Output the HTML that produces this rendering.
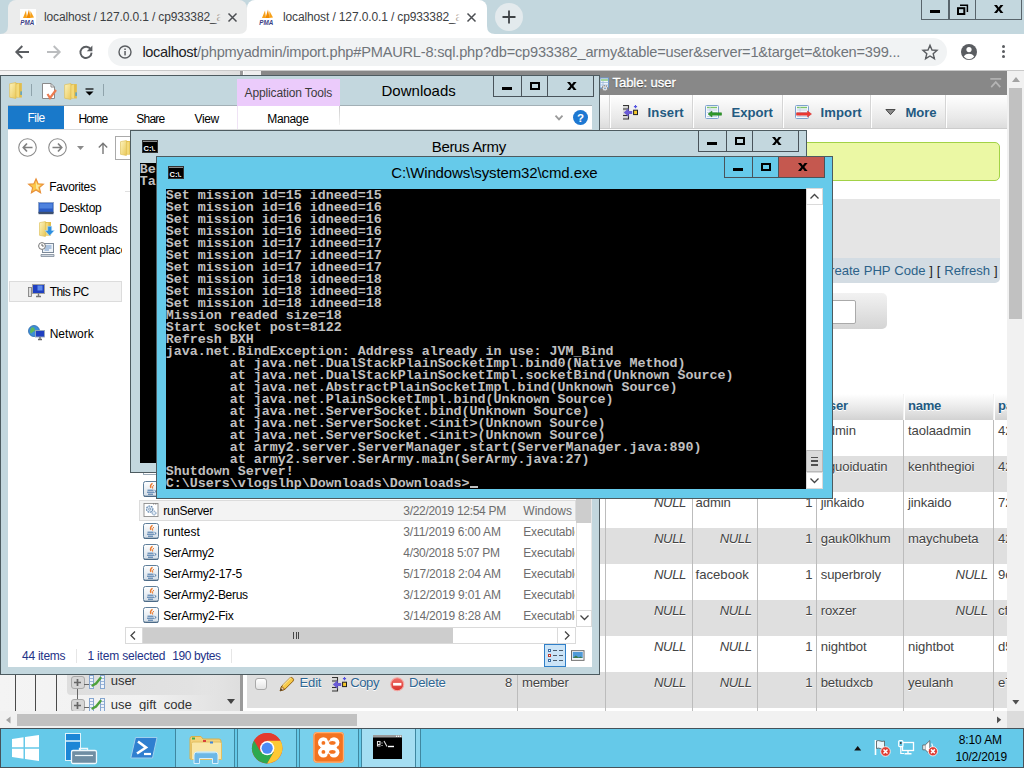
<!DOCTYPE html>
<html lang="en">
<head>
<meta charset="utf-8">
<title>localhost / 127.0.0.1 / cp933382_army / user | phpMyAdmin</title>
<style>
*{box-sizing:border-box;margin:0;padding:0}
html,body{width:1024px;height:768px;overflow:hidden;background:#fff}
body{position:relative;font-family:"Liberation Sans",Arial,sans-serif;font-size:12px;color:#000}
.a{position:absolute}
.t{position:absolute;white-space:nowrap;line-height:1}
svg{position:absolute;overflow:visible}
.seg{letter-spacing:-0.3px}
#tabstrip{left:0;top:0;width:1024px;height:34px;background:#c3d7de}
.tab{top:0;height:34px;border-radius:8px 8px 0 0}
.tabtxt{font-size:12px;color:#3c4043;top:10px}
#toolbar{left:0;top:34px;width:1024px;height:37px;background:#fff;border-bottom:1px solid #c9c9c9}
#omni{left:108px;top:38px;width:839px;height:28px;border-radius:14px;background:#f1f3f4}
.wc{top:0;height:20px;border:1px solid #58646b;border-top:none}
#page{left:0;top:71px;width:1024px;height:657px;background:#fff;overflow:hidden}
.lnk{color:#235a81}
.td{position:absolute;white-space:nowrap;font-size:13.1px;color:#444;line-height:1}
.nul{font-style:italic}
#taskbar{left:0;top:728px;width:1024px;height:40px;background:#65c9e9;border:1px solid #46525a}
.win{position:absolute;border:1px solid #4d5b60}
.cb{position:absolute;border:1px solid #49535a;border-top:none}
.cmdtxt{position:absolute;font-family:"Liberation Mono","DejaVu Sans Mono",monospace;font-weight:bold;font-size:13.33px;line-height:12px;color:#c0c0c0;white-space:pre}
.ex{position:absolute;white-space:nowrap;font-size:12px;line-height:1;letter-spacing:-0.3px}
</style>
</head>
<body>
<div class="a" id="tabstrip"></div>
<div class="a tab" style="left:8px;width:239px;background:#ebecec"></div>
<svg style="left:0;top:26px" width="8" height="8" viewBox="0 0 8 8"><path d="M8 0V8H0Q8 8 8 0Z" fill="#ebecec"/></svg>
<div class="a tab" style="left:247px;width:240px;background:#fff"></div>
<svg style="left:239px;top:26px" width="8" height="8" viewBox="0 0 8 8"><path d="M8 0V8H0Q8 8 8 0Z" fill="#fff"/></svg>
<svg style="left:487px;top:26px" width="8" height="8" viewBox="0 0 8 8"><path d="M0 0V8H8Q0 8 0 0Z" fill="#fff"/></svg>
<svg style="left:20px;top:9px" width="16" height="16" viewBox="0 0 16 16"><rect width="16" height="16" fill="#fff"/><path d="M3 9 L6 1.5 L7 9 Z" fill="#f7a11a"/><path d="M6.5 9 L9 0.5 L10.5 9 Z" fill="#f28c00"/><path d="M10 9 L10.5 2 L14 8.5 Z" fill="#f7a11a"/><text x="0.3" y="15.5" font-family="Liberation Sans,sans-serif" font-size="6.3" font-weight="bold" font-style="italic" fill="#3a3f86">PMA</text></svg>
<svg style="left:259px;top:9px" width="16" height="16" viewBox="0 0 16 16"><rect width="16" height="16" fill="#fff"/><path d="M3 9 L6 1.5 L7 9 Z" fill="#f7a11a"/><path d="M6.5 9 L9 0.5 L10.5 9 Z" fill="#f28c00"/><path d="M10 9 L10.5 2 L14 8.5 Z" fill="#f7a11a"/><text x="0.3" y="15.5" font-family="Liberation Sans,sans-serif" font-size="6.3" font-weight="bold" font-style="italic" fill="#3a3f86">PMA</text></svg>
<div class="t tabtxt" style="left:44px;top:8px;height:18px;line-height:18px;width:177px;overflow:hidden;letter-spacing:-0.13px">localhost / 127.0.0.1 / cp933382_army</div>
<div class="a" style="left:214px;top:8px;width:8px;height:18px;background:linear-gradient(to right,rgba(235,236,236,0),#ebecec 85%)"></div>
<div class="t tabtxt" style="left:283px;top:8px;height:18px;line-height:18px;width:177px;overflow:hidden;letter-spacing:-0.13px">localhost / 127.0.0.1 / cp933382_army</div>
<div class="a" style="left:453px;top:8px;width:8px;height:18px;background:linear-gradient(to right,rgba(255,255,255,0),#fff 85%)"></div>
<svg style="left:227.5px;top:12.5px" width="9" height="9" viewBox="0 0 9 9"><path d="M0.5 0.5L8.5 8.5M8.5 0.5L0.5 8.5" stroke="#4a4d51" stroke-width="1.5"/></svg>
<svg style="left:466.5px;top:12.5px" width="9" height="9" viewBox="0 0 9 9"><path d="M0.5 0.5L8.5 8.5M8.5 0.5L0.5 8.5" stroke="#4a4d51" stroke-width="1.5"/></svg>
<div class="a" style="left:495px;top:2.5px;width:28px;height:28px;border-radius:14px;background:#e3eaed"></div>
<svg style="left:502px;top:9.5px" width="14" height="14" viewBox="0 0 14 14"><path d="M7 0.5V13.5M0.5 7H13.5" stroke="#3f4346" stroke-width="1.8"/></svg>
<div class="a wc" style="left:921px;width:28px;background:#c3d7de"></div>
<div class="a wc" style="left:949px;width:27px;background:#c3d7de"></div>
<div class="a wc" style="left:975px;width:47px;background:#c3d7de"></div>
<div class="a" style="left:930px;top:10px;width:10px;height:3px;background:#000"></div>
<svg style="left:957px;top:3.6px" width="12" height="12" viewBox="0 0 12 12"><path d="M3 1.2H10.4V8" stroke="#000" stroke-width="1.5" fill="none"/><rect x="1" y="4.2" width="6.3" height="5.8" fill="none" stroke="#000" stroke-width="2"/></svg>
<svg style="left:994px;top:5px" width="9.4" height="8" viewBox="0 0 9.6 8"><path d="M0 0H3L4.8 2.4L6.6 0H9.6L6.3 4L9.6 8H6.6L4.8 5.6L3 8H0L3.3 4Z" fill="#000"/></svg>
<div class="a" id="toolbar"></div>
<svg style="left:15px;top:45px" width="14" height="14" viewBox="0 0 14 14"><path d="M14 7H2M7.3 1L1.3 7L7.3 13" stroke="#5a5d61" stroke-width="1.9" fill="none"/></svg>
<svg style="left:47px;top:45px" width="14" height="14" viewBox="0 0 14 14"><path d="M0 7H12M6.7 1L12.7 7L6.7 13" stroke="#bbbdbf" stroke-width="1.9" fill="none"/></svg>
<svg style="left:79px;top:45px" width="14" height="14" viewBox="0 0 14 14"><path d="M11.9 4.6A5.6 5.6 0 1 0 12.6 7.6" stroke="#5a5d61" stroke-width="1.9" fill="none"/><path d="M13.4 0.6V6.2H7.8Z" fill="#5a5d61"/></svg>
<div class="a" id="omni"></div>
<svg style="left:118px;top:45px" width="14" height="14" viewBox="0 0 14 14"><circle cx="7" cy="7" r="6" fill="none" stroke="#5a5d61" stroke-width="1.4"/><rect x="6.3" y="6" width="1.5" height="4.4" fill="#5a5d61"/><rect x="6.3" y="3.5" width="1.5" height="1.5" fill="#5a5d61"/></svg>
<div class="t" style="left:142.4px;top:44.64px;font-size:14.6px;color:#202124;letter-spacing:-0.336px">localhost<span style="color:#70757a;letter-spacing:-0.198px">/phpmyadmin/import.php#PMAURL-8:sql.php?db=cp933382_army&amp;table=user&amp;server=1&amp;target=&amp;token=399...</span></div>
<svg style="left:922px;top:44px" width="16" height="16" viewBox="0 0 16 16"><path d="M8 1.3L10 6L15 6.4L11.2 9.7L12.4 14.7L8 12L3.6 14.7L4.8 9.7L1 6.4L6 6Z" fill="none" stroke="#5a5d61" stroke-width="1.4" stroke-linejoin="miter"/></svg>
<svg style="left:961px;top:44px" width="16" height="16" viewBox="0 0 16 16"><circle cx="8" cy="8" r="8" fill="#5a5d61"/><circle cx="8" cy="5.6" r="2.6" fill="#fff"/><path d="M2.8 12.6C4 10.4 6 9.8 8 9.8S12 10.4 13.2 12.6A6.6 6.6 0 0 1 2.8 12.6Z" fill="#fff"/></svg>
<div class="a" style="left:1001.5px;top:45.0px;width:3px;height:3px;border-radius:2px;background:#5a5d61"></div>
<div class="a" style="left:1001.5px;top:50.0px;width:3px;height:3px;border-radius:2px;background:#5a5d61"></div>
<div class="a" style="left:1001.5px;top:55.0px;width:3px;height:3px;border-radius:2px;background:#5a5d61"></div>
<div class="a" id="page">
<div class="a" style="left:0;top:0;width:240px;height:640px;background:linear-gradient(to right,#f4f4f4,#f1f1f1 60%,#dedede)"></div>
<div class="a" style="left:239.5px;top:0;width:3.5px;height:640px;background:#9a9a9a"></div>
<div class="a" style="left:244px;top:0;width:763px;height:24px;background:#888"></div>
<div class="a" style="left:244px;top:0;width:17px;height:4px;background:#eee"></div>
<div class="t" style="left:612.5px;top:5px;font-size:13.1px;color:#fff;letter-spacing:-0.08px;text-shadow:0 1px 1px #333;-webkit-text-stroke:0.35px #fff;">Table: user</div>
<svg style="left:600px;top:6.5px" width="10" height="14" viewBox="0 0 10 14"><rect x="0" y="0" width="8.5" height="10" fill="#eef3f9" stroke="#6d9bd0" stroke-width="1"/><path d="M1 2H8" stroke="#79c36a" stroke-width="1.3"/><path d="M0 4.5H8.5M0 7H8.5M3 3V10" stroke="#9bb9dd" stroke-width="0.8"/><circle cx="5" cy="10.3" r="2.7" fill="#e4e4e4" stroke="#8a8a8a" stroke-width="1.3" stroke-dasharray="1.4 0.8"/><circle cx="5" cy="10.3" r="0.9" fill="#6d9bd0"/></svg>
<svg style="left:990px;top:7px" width="11.5" height="10" viewBox="0 0 12 11"><path d="M0 1H12" stroke="#b4b4b4" stroke-width="1.8"/><path d="M1 10L6 4.5L11 10" stroke="#b4b4b4" stroke-width="1.8" fill="none"/></svg>
<div class="a" style="left:244px;top:24px;width:763px;height:34px;background:linear-gradient(#fff,#e9e9e9 70%,#dcdcdc);border-bottom:1px solid #ccc"></div>
<div class="a" style="left:609px;top:24px;width:2px;height:33px;background:linear-gradient(to right,#d5d5d5 50%,#fff 50%)"></div>
<div class="a" style="left:692px;top:24px;width:2px;height:33px;background:linear-gradient(to right,#d5d5d5 50%,#fff 50%)"></div>
<div class="a" style="left:782px;top:24px;width:2px;height:33px;background:linear-gradient(to right,#d5d5d5 50%,#fff 50%)"></div>
<div class="a" style="left:870px;top:24px;width:2px;height:33px;background:linear-gradient(to right,#d5d5d5 50%,#fff 50%)"></div>
<div class="a" style="left:945px;top:24px;width:2px;height:33px;background:linear-gradient(to right,#d5d5d5 50%,#fff 50%)"></div>
<div class="t" style="left:647.6px;top:35px;font-size:13.1px;color:#235a81;letter-spacing:0.088px;font-weight:bold;">Insert</div>
<div class="t" style="left:731.5px;top:35px;font-size:13.1px;color:#235a81;letter-spacing:0.002px;font-weight:bold;">Export</div>
<div class="t" style="left:820.6px;top:35px;font-size:13.1px;color:#235a81;letter-spacing:0.075px;font-weight:bold;">Import</div>
<div class="t" style="left:905.5px;top:35px;font-size:13.1px;color:#235a81;letter-spacing:-0.075px;font-weight:bold;">More</div>
<svg style="left:622px;top:32.7px" width="16" height="16" viewBox="0 0 16 16"><rect x="1" y="1.5" width="5.5" height="13.5" fill="#d6d6d6"/><path d="M1 1.5H6.5V15H1M1 5H6.5M1 11.5H6.5" stroke="#333" stroke-width="1.1" fill="none"/><path d="M1.8 8.5L6.6 4.3V7H10.2V10H6.6V12.7Z" fill="#6a5bd6"/><rect x="11.6" y="6.2" width="3.9" height="4.4" fill="#f6c92c" stroke="#222" stroke-width="1"/><path d="M13.5 1V4.2M11.9 2.6H15.1" stroke="#5252e0" stroke-width="1.1"/></svg>
<svg style="left:704.5px;top:33.5px" width="17" height="15" viewBox="0 0 17 15"><rect x="0.5" y="0.5" width="13" height="13" rx="1" fill="#f4f8fc" stroke="#7da2ce"/><path d="M2 2.5H12" stroke="#7cc36a" stroke-width="1.4"/><path d="M2 5H12M2 7.5H12M2 11.5H12" stroke="#c3d3e8" stroke-width="1"/><path d="M5 2V12" stroke="#c3d3e8" stroke-width="0.8"/><path d="M3 9L7 6V7.8H16.5V10.2H7V12Z" fill="#2f9a2b" stroke="#1f7a1c" stroke-width="0.5"/></svg>
<svg style="left:795px;top:33.5px" width="17" height="15" viewBox="0 0 17 15"><rect x="0.5" y="0.5" width="13" height="13" rx="1" fill="#f4f8fc" stroke="#7da2ce"/><path d="M2 2.5H12" stroke="#7cc36a" stroke-width="1.4"/><path d="M2 5H12M2 7.5H12M2 11.5H12" stroke="#c3d3e8" stroke-width="1"/><path d="M5 2V12" stroke="#c3d3e8" stroke-width="0.8"/><path d="M16.5 9L12.5 6V7.8H1.5V10.2H12.5V12Z" fill="#ee3a36" stroke="#d12a26" stroke-width="0.5"/></svg>
<svg style="left:885px;top:38.3px" width="11" height="6.2" viewBox="0 0 12 7"><path d="M0.8 0.6H11.2L6 6.4Z" fill="#8a8a8a" stroke="#3a3a3a" stroke-width="1"/></svg>
<div class="a" style="left:300px;top:71px;width:700px;height:39px;background:#ebf8a4;border:1px solid #a2d246;border-radius:5px"></div>
<div class="a" style="left:300px;top:127.5px;width:700px;height:59.5px;background:#e5e5e5"></div>
<div class="a" style="left:300px;top:187px;width:700px;height:25px;background:#d3dce3;border-radius:0 0 5px 5px"></div>
<div class="t" style="right:26.5px;top:192.5px;font-size:13.1px;color:#2c6289;letter-spacing:-0.03px;word-spacing:0.3px"><span style="color:#222">[</span> Create PHP Code <span style="color:#222">] [</span> Refresh <span style="color:#222">]</span></div>
<div class="a" style="left:300px;top:222px;width:587px;height:36px;background:linear-gradient(#f2f2f2,#d4d4d4);border-radius:5px"></div>
<div class="a" style="left:700px;top:229px;width:156px;height:24px;background:#fff;border:1px solid #aaa;border-radius:2px"></div>
<div class="a" style="left:244px;top:323px;width:763px;height:26px;background:linear-gradient(#fff,#e6e6e6 60%,#d2d2d2)"></div>
<div class="a" style="left:244px;top:349px;width:763px;height:36px;background:#fff"></div>
<div class="a" style="left:244px;top:385px;width:763px;height:36px;background:#dfdfdf"></div>
<div class="a" style="left:244px;top:421px;width:763px;height:36px;background:#fff"></div>
<div class="a" style="left:244px;top:457px;width:763px;height:36px;background:#dfdfdf"></div>
<div class="a" style="left:244px;top:493px;width:763px;height:36px;background:#fff"></div>
<div class="a" style="left:244px;top:529px;width:763px;height:36px;background:#dfdfdf"></div>
<div class="a" style="left:244px;top:565px;width:763px;height:36px;background:#fff"></div>
<div class="a" style="left:244px;top:601px;width:763px;height:36px;background:#dfdfdf"></div>
<div class="a" style="left:244px;top:637px;width:763px;height:36px;background:#fff"></div>
<div class="a" style="left:244px;top:673px;width:763px;height:36px;background:#dfdfdf"></div>
<div class="a" style="left:244px;top:323px;width:3px;height:320px;background:#fff"></div>
<div class="a" style="left:244px;top:637px;width:780px;height:3px;background:#fff"></div>
<div class="a" style="left:517px;top:323px;width:1px;height:340px;background:#bcbcbc"></div>
<div class="a" style="left:517px;top:323px;width:2px;height:26px;background:linear-gradient(to right,#f2f2f2 50%,#fff 50%)"></div>
<div class="a" style="left:605px;top:323px;width:1px;height:340px;background:#bcbcbc"></div>
<div class="a" style="left:605px;top:323px;width:2px;height:26px;background:linear-gradient(to right,#f2f2f2 50%,#fff 50%)"></div>
<div class="a" style="left:692px;top:323px;width:1px;height:340px;background:#bcbcbc"></div>
<div class="a" style="left:692px;top:323px;width:2px;height:26px;background:linear-gradient(to right,#f2f2f2 50%,#fff 50%)"></div>
<div class="a" style="left:757px;top:323px;width:1px;height:340px;background:#bcbcbc"></div>
<div class="a" style="left:757px;top:323px;width:2px;height:26px;background:linear-gradient(to right,#f2f2f2 50%,#fff 50%)"></div>
<div class="a" style="left:816px;top:323px;width:1px;height:340px;background:#bcbcbc"></div>
<div class="a" style="left:816px;top:323px;width:2px;height:26px;background:linear-gradient(to right,#f2f2f2 50%,#fff 50%)"></div>
<div class="a" style="left:903px;top:323px;width:1px;height:340px;background:#bcbcbc"></div>
<div class="a" style="left:903px;top:323px;width:2px;height:26px;background:linear-gradient(to right,#f2f2f2 50%,#fff 50%)"></div>
<div class="a" style="left:993px;top:323px;width:1px;height:340px;background:#bcbcbc"></div>
<div class="a" style="left:993px;top:323px;width:2px;height:26px;background:linear-gradient(to right,#f2f2f2 50%,#fff 50%)"></div>
<div class="t" style="left:820.7px;top:328px;font-size:13.1px;color:#235a81;letter-spacing:-0.043px;font-weight:bold;text-shadow:0 1px 0 #fff;">user</div>
<div class="t" style="left:908px;top:328px;font-size:13.1px;color:#235a81;letter-spacing:-0.305px;font-weight:bold;text-shadow:0 1px 0 #fff;">name</div>
<div class="t" style="left:998px;top:328px;font-size:13.1px;color:#235a81;letter-spacing:-0.112px;font-weight:bold;text-shadow:0 1px 0 #fff;">pass</div>
<div class="t" style="left:820.7px;top:353px;font-size:13.1px;color:#444;letter-spacing:-0.107px;text-shadow:0 1px 0 #fff;">admin</div>
<div class="t" style="left:908px;top:353px;font-size:13.1px;color:#444;letter-spacing:-0.109px;text-shadow:0 1px 0 #fff;">taolaadmin</div>
<div class="t" style="left:998px;top:353px;font-size:13.1px;color:#444;letter-spacing:-0.109px;text-shadow:0 1px 0 #fff;">42</div>
<div class="t" style="left:820.7px;top:389px;font-size:13.1px;color:#444;letter-spacing:-0.092px;text-shadow:0 1px 0 #fff;">nguoiduatin</div>
<div class="t" style="left:908px;top:389px;font-size:13.1px;color:#444;letter-spacing:-0.046px;text-shadow:0 1px 0 #fff;">kenhthegioi</div>
<div class="t" style="left:998px;top:389px;font-size:13.1px;color:#444;letter-spacing:-0.109px;text-shadow:0 1px 0 #fff;">42</div>
<div class="t" style="left:654.0px;top:425px;font-size:13.1px;color:#444;letter-spacing:-0.373px;font-style:italic;text-shadow:0 1px 0 #fff;">NULL</div>
<div class="t" style="left:695.6px;top:425px;font-size:13.1px;color:#444;letter-spacing:-0.096px;text-shadow:0 1px 0 #fff;">admin</div>
<div class="t" style="left:805.1999999999999px;top:425px;font-size:13.1px;color:#444;letter-spacing:-1.686px;text-shadow:0 1px 0 #fff;">1</div>
<div class="t" style="left:820.7px;top:425px;font-size:13.1px;color:#444;letter-spacing:-0.115px;text-shadow:0 1px 0 #fff;">jinkaido</div>
<div class="t" style="left:908px;top:425px;font-size:13.1px;color:#444;letter-spacing:-0.115px;text-shadow:0 1px 0 #fff;">jinkaido</div>
<div class="t" style="left:998px;top:425px;font-size:13.1px;color:#444;letter-spacing:-0.109px;text-shadow:0 1px 0 #fff;">72</div>
<div class="t" style="left:654.0px;top:461px;font-size:13.1px;color:#444;letter-spacing:-0.373px;font-style:italic;text-shadow:0 1px 0 #fff;">NULL</div>
<div class="t" style="left:719.7px;top:461px;font-size:13.1px;color:#444;letter-spacing:-0.373px;font-style:italic;text-shadow:0 1px 0 #fff;">NULL</div>
<div class="t" style="left:805.1999999999999px;top:461px;font-size:13.1px;color:#444;letter-spacing:-1.686px;text-shadow:0 1px 0 #fff;">1</div>
<div class="t" style="left:820.7px;top:461px;font-size:13.1px;color:#444;letter-spacing:-0.084px;text-shadow:0 1px 0 #fff;">gauk0lkhum</div>
<div class="t" style="left:908px;top:461px;font-size:13.1px;color:#444;letter-spacing:-0.077px;text-shadow:0 1px 0 #fff;">maychubeta</div>
<div class="t" style="left:998px;top:461px;font-size:13.1px;color:#444;letter-spacing:-0.109px;text-shadow:0 1px 0 #fff;">42</div>
<div class="t" style="left:654.0px;top:497px;font-size:13.1px;color:#444;letter-spacing:-0.373px;font-style:italic;text-shadow:0 1px 0 #fff;">NULL</div>
<div class="t" style="left:695.6px;top:497px;font-size:13.1px;color:#444;letter-spacing:0.004px;text-shadow:0 1px 0 #fff;">facebook</div>
<div class="t" style="left:805.1999999999999px;top:497px;font-size:13.1px;color:#444;letter-spacing:-1.686px;text-shadow:0 1px 0 #fff;">1</div>
<div class="t" style="left:820.7px;top:497px;font-size:13.1px;color:#444;letter-spacing:-0.086px;text-shadow:0 1px 0 #fff;">superbroly</div>
<div class="t" style="left:955.6px;top:497px;font-size:13.1px;color:#444;letter-spacing:-0.373px;font-style:italic;text-shadow:0 1px 0 #fff;">NULL</div>
<div class="t" style="left:998px;top:497px;font-size:13.1px;color:#444;letter-spacing:-0.104px;text-shadow:0 1px 0 #fff;">9c</div>
<div class="t" style="left:654.0px;top:533px;font-size:13.1px;color:#444;letter-spacing:-0.373px;font-style:italic;text-shadow:0 1px 0 #fff;">NULL</div>
<div class="t" style="left:719.7px;top:533px;font-size:13.1px;color:#444;letter-spacing:-0.373px;font-style:italic;text-shadow:0 1px 0 #fff;">NULL</div>
<div class="t" style="left:805.1999999999999px;top:533px;font-size:13.1px;color:#444;letter-spacing:-1.686px;text-shadow:0 1px 0 #fff;">1</div>
<div class="t" style="left:820.7px;top:533px;font-size:13.1px;color:#444;letter-spacing:-0.133px;text-shadow:0 1px 0 #fff;">roxzer</div>
<div class="t" style="left:955.6px;top:533px;font-size:13.1px;color:#444;letter-spacing:-0.373px;font-style:italic;text-shadow:0 1px 0 #fff;">NULL</div>
<div class="t" style="left:998px;top:533px;font-size:13.1px;color:#444;letter-spacing:-0.076px;text-shadow:0 1px 0 #fff;">cf</div>
<div class="t" style="left:654.0px;top:569px;font-size:13.1px;color:#444;letter-spacing:-0.373px;font-style:italic;text-shadow:0 1px 0 #fff;">NULL</div>
<div class="t" style="left:719.7px;top:569px;font-size:13.1px;color:#444;letter-spacing:-0.373px;font-style:italic;text-shadow:0 1px 0 #fff;">NULL</div>
<div class="t" style="left:805.1999999999999px;top:569px;font-size:13.1px;color:#444;letter-spacing:-1.686px;text-shadow:0 1px 0 #fff;">1</div>
<div class="t" style="left:820.7px;top:569px;font-size:13.1px;color:#444;letter-spacing:-0.087px;text-shadow:0 1px 0 #fff;">nightbot</div>
<div class="t" style="left:908px;top:569px;font-size:13.1px;color:#444;letter-spacing:-0.087px;text-shadow:0 1px 0 #fff;">nightbot</div>
<div class="t" style="left:998px;top:569px;font-size:13.1px;color:#444;letter-spacing:-0.109px;text-shadow:0 1px 0 #fff;">d5</div>
<div class="t" style="left:654.0px;top:605px;font-size:13.1px;color:#444;letter-spacing:-0.373px;font-style:italic;text-shadow:0 1px 0 #fff;">NULL</div>
<div class="t" style="left:719.7px;top:605px;font-size:13.1px;color:#444;letter-spacing:-0.373px;font-style:italic;text-shadow:0 1px 0 #fff;">NULL</div>
<div class="t" style="left:805.1999999999999px;top:605px;font-size:13.1px;color:#444;letter-spacing:-1.686px;text-shadow:0 1px 0 #fff;">1</div>
<div class="t" style="left:820.7px;top:605px;font-size:13.1px;color:#444;letter-spacing:-0.1px;text-shadow:0 1px 0 #fff;">betudxcb</div>
<div class="t" style="left:908px;top:605px;font-size:13.1px;color:#444;letter-spacing:-0.098px;text-shadow:0 1px 0 #fff;">yeulanh</div>
<div class="t" style="left:998px;top:605px;font-size:13.1px;color:#444;letter-spacing:-0.109px;text-shadow:0 1px 0 #fff;">e7</div>
<div class="a" style="left:255px;top:607px;width:12px;height:12px;border:1px solid #a9a9a9;border-radius:3px;background:linear-gradient(#fff,#e4e4e4)"></div>
<svg style="left:279px;top:604.5px" width="16" height="16" viewBox="0 0 16 16"><path d="M1.2 14.8L2.6 10.2L10.8 2Q12.3 0.8 13.8 2.2T14 5.2L5.8 13.4Z" fill="#f7c948" stroke="#8f5e12" stroke-width="1"/><path d="M4 9.6L12 1.8" stroke="#fbe08a" stroke-width="1.2"/><path d="M1.2 14.8L2.6 10.2L5.8 13.4Z" fill="#f0c9a0" stroke="#7a4a0a" stroke-width="0.8"/><path d="M1.2 14.8L2 12.6L3.4 14Z" fill="#333"/></svg>
<div class="t" style="left:299.5px;top:605px;font-size:13.1px;color:#2d6694;letter-spacing:-0.193px;text-shadow:0 1px 0 #fff;">Edit</div>
<svg style="left:330.5px;top:604.6px" width="16" height="16" viewBox="0 0 16 16"><rect x="1" y="1.5" width="5.5" height="13.5" fill="#d6d6d6"/><path d="M1 1.5H6.5V15H1M1 5H6.5M1 11.5H6.5" stroke="#333" stroke-width="1.1" fill="none"/><path d="M1.8 8.5L6.6 4.3V7H10.2V10H6.6V12.7Z" fill="#6a5bd6"/><rect x="11.6" y="6.2" width="3.9" height="4.4" fill="#f6c92c" stroke="#222" stroke-width="1"/><path d="M13.5 1V4.2M11.9 2.6H15.1" stroke="#5252e0" stroke-width="1.1"/></svg>
<div class="t" style="left:350.3px;top:605px;font-size:13.1px;color:#2d6694;letter-spacing:-0.47px;text-shadow:0 1px 0 #fff;">Copy</div>
<svg style="left:390px;top:606px" width="14.5" height="14.5" viewBox="0 0 14 14"><defs><linearGradient id="dg" x1="0" y1="0" x2="0" y2="1"><stop offset="0" stop-color="#f0706a"/><stop offset="1" stop-color="#d8302a"/></linearGradient></defs><circle cx="7" cy="7" r="6.3" fill="url(#dg)" stroke="#f3a9a5" stroke-width="1"/><rect x="3" y="5.7" width="8" height="2.6" fill="#fff"/></svg>
<div class="t" style="left:409px;top:605px;font-size:13.1px;color:#2d6694;letter-spacing:-0.195px;text-shadow:0 1px 0 #fff;">Delete</div>
<div class="t" style="left:505px;top:605px;font-size:13.1px;color:#444;letter-spacing:-0.786px;text-shadow:0 1px 0 #fff;">8</div>
<div class="t" style="left:522px;top:605px;font-size:13.1px;color:#444;letter-spacing:-0.257px;text-shadow:0 1px 0 #fff;">member</div>
<div class="a" style="left:67px;top:601px;width:156px;height:23px;border-radius:0 0 0 4px;background:linear-gradient(to right,#dedede,#e2e2e2 80%,rgba(226,226,226,0))"></div>
<div class="a" style="left:15px;top:601px;width:1px;height:40px;background:#4a4a4a"></div>
<div class="a" style="left:35px;top:601px;width:1px;height:40px;background:#4a4a4a"></div>
<div class="a" style="left:56px;top:601px;width:1px;height:40px;background:#4a4a4a"></div>
<div class="a" style="left:77px;top:611px;width:1px;height:26px;background:#666"></div>
<div class="a" style="left:71px;top:604.5px;width:13.5px;height:13px;border:1px solid #a8a8a8;border-radius:3px;background:#d6d6d6"></div>
<svg style="left:74.2px;top:607.5px" width="7" height="7" viewBox="0 0 7 7"><path d="M3.5 0V7M0 3.5H7" stroke="#666" stroke-width="1.7"/></svg>
<div class="a" style="left:84px;top:612.5px;width:5px;height:1px;background:#666"></div>
<svg style="left:89px;top:603.5px" width="16" height="14" viewBox="0 0 16 14"><rect x="0.5" y="0.5" width="4" height="13" fill="#eef3fa" stroke="#86a6cf"/><rect x="11.5" y="0.5" width="4" height="13" fill="#eef3fa" stroke="#86a6cf"/><path d="M1 3.5H4M1 6.5H4M1 9.5H4M12 3.5H15M12 6.5H15M12 9.5H15" stroke="#86a6cf" stroke-width="0.8"/><path d="M3.5 10.5L7 8.5L11.5 3" stroke="#4ea23a" stroke-width="2.4" fill="none" stroke-linecap="round"/></svg>
<div class="t" style="left:110.8px;top:603px;font-size:13.1px;color:#333;letter-spacing:-0.121px;">user</div>
<div class="a" style="left:71px;top:627.5px;width:13.5px;height:13px;border:1px solid #a8a8a8;border-radius:3px;background:#d6d6d6"></div>
<svg style="left:74.2px;top:630.5px" width="7" height="7" viewBox="0 0 7 7"><path d="M3.5 0V7M0 3.5H7" stroke="#666" stroke-width="1.7"/></svg>
<div class="a" style="left:84px;top:635.5px;width:5px;height:1px;background:#666"></div>
<svg style="left:89px;top:626.5px" width="16" height="14" viewBox="0 0 16 14"><rect x="0.5" y="0.5" width="4" height="13" fill="#eef3fa" stroke="#86a6cf"/><rect x="11.5" y="0.5" width="4" height="13" fill="#eef3fa" stroke="#86a6cf"/><path d="M1 3.5H4M1 6.5H4M1 9.5H4M12 3.5H15M12 6.5H15M12 9.5H15" stroke="#86a6cf" stroke-width="0.8"/><path d="M3.5 10.5L7 8.5L11.5 3" stroke="#4ea23a" stroke-width="2.4" fill="none" stroke-linecap="round"/></svg>
<div class="t" style="left:110.8px;top:627px;font-size:13.1px;color:#333;letter-spacing:-0.029px;">use_gift_code</div>
<svg style="left:227px;top:628px" width="8" height="5" viewBox="0 0 8 5"><path d="M0 0H8L4 5Z" fill="#444"/></svg>
<div class="a" style="left:1007px;top:0;width:17px;height:640px;background:#f1f1f1"></div>
<div class="a" style="left:1009px;top:17px;width:13px;height:231px;background:#c1c1c1"></div>
<svg style="left:1011.5px;top:6px" width="8" height="5" viewBox="0 0 8 5"><path d="M0 5H8L4 0Z" fill="#a3a3a3"/></svg>
<svg style="left:1011.7px;top:629px" width="7.6" height="4.4" viewBox="0 0 8 5"><path d="M0 0H8L4 5Z" fill="#505050"/></svg>
<div class="a" style="left:0;top:640px;width:1024px;height:17px;background:#f1f1f1"></div>
<div class="a" style="left:17px;top:642.5px;width:340px;height:12px;background:#c1c1c1"></div>
<svg style="left:6px;top:644.5px" width="4.5" height="8" viewBox="0 0 5 8"><path d="M5 0V8L0 4Z" fill="#a3a3a3"/></svg>
<svg style="left:997px;top:645.2px" width="4.2" height="7.6" viewBox="0 0 5 8"><path d="M0 0V8L5 4Z" fill="#505050"/></svg>
<div class="a" style="left:1007px;top:640px;width:17px;height:17px;background:#dcdcdc"></div>
</div>
<div class="a" id="taskbar"></div>
<svg style="left:12px;top:735px" width="27" height="26" viewBox="0 0 27 26"><path d="M0 4L11.5 2.3V12.3H0ZM13 2L27 0V12.3H13ZM0 13.7H11.5V23.7L0 22ZM13 13.7H27V26L13 24Z" fill="#fff"/></svg>
<svg style="left:65px;top:733px" width="33" height="31" viewBox="0 0 33 31"><rect x="0.5" y="0.5" width="15" height="27" fill="#1c86d6" stroke="#dff3fb" stroke-width="1"/><path d="M0.5 8H15.5" stroke="#dff3fb" stroke-width="1.5"/><rect x="6.5" y="17.5" width="25" height="13" rx="1.5" fill="#6f8ea3" stroke="#eef8fc" stroke-width="1.3"/><path d="M14.5 17.5V15.5H22.5V17.5" stroke="#eef8fc" stroke-width="1.3" fill="none"/><path d="M10 22.5H28" stroke="#eef8fc" stroke-width="1.2"/></svg>
<svg style="left:130px;top:737px" width="28" height="22" viewBox="0 0 28 22"><path d="M5.5 0.5H27L22.5 21H0.8Z" fill="#2f7fd0" stroke="#9fd0ee" stroke-width="1"/><path d="M8 4.5L16 10.5L7 16.5" stroke="#fff" stroke-width="2.6" fill="none"/><path d="M14 17H21" stroke="#fff" stroke-width="2.2"/></svg>
<div class="a" style="left:175px;top:729px;width:60px;height:38px;background:#78d0ec;border-left:1px solid #3f87a0;border-right:1px solid #3f87a0"></div>
<div class="a" style="left:237px;top:729px;width:60px;height:38px;background:#78d0ec;border-left:1px solid #3f87a0;border-right:1px solid #3f87a0"></div>
<div class="a" style="left:299px;top:729px;width:60px;height:38px;background:#78d0ec;border-left:1px solid #3f87a0;border-right:1px solid #3f87a0"></div>
<div class="a" style="left:361px;top:729px;width:55px;height:38px;background:#a5def2;border-left:1px solid #3f87a0;border-right:1px solid #3f87a0"></div>
<div class="a" style="left:416px;top:729px;width:5px;height:38px;border-right:1px solid #3f87a0;background:#8dd6ee"></div>
<svg style="left:189px;top:734px" width="34" height="30" viewBox="0 0 34 30"><path d="M1 4.5Q1 2.5 3 2.5H12L14 5H30Q32 5 32 7V25H1Z" fill="#f3d27c" stroke="#d9b04d" stroke-width="1"/><path d="M4 8H31Q32.5 8 32.5 9.5V25.5H2.5V9.5Q2.5 8 4 8Z" fill="#f9e6a6" stroke="#e2bf62" stroke-width="1"/><rect x="3" y="3.5" width="3" height="2" fill="#3fae49"/><rect x="14" y="6" width="3" height="2" fill="#d9403a"/><rect x="21" y="7.5" width="3" height="2" fill="#3f86d9"/><path d="M5 29.5V21Q5 18 8 18H26Q29 18 29 21V29.5H23.5V24.5H10.5V29.5Z" fill="#6cb8e6" stroke="#d8f0fb" stroke-width="1"/><path d="M8 18.5H26" stroke="#b9e3f7" stroke-width="1.5"/></svg>
<svg style="left:252px;top:732.8px" width="30.4" height="30.4" viewBox="0 0 30 30"><circle cx="15" cy="15" r="15" fill="#e33b2e"/><path d="M15 15L2.0 7.5A15 15 0 0 0 15 30L21.5 18.75Z" fill="#2da94f"/><path d="M15 15L21.5 18.75L15 30A15 15 0 0 0 28 7.5H15Z" fill="#fcc934"/><path d="M15 7.5H28A15 15 0 0 0 2 7.5L8.5 18.75Z" fill="#e33b2e"/><circle cx="15" cy="15" r="7" fill="#fff"/><circle cx="15" cy="15" r="5.5" fill="#4c8bf5"/></svg>
<svg style="left:313.4px;top:732.2px" width="31.4" height="30.8" viewBox="0 0 32 32"><rect x="0" y="0" width="32" height="32" rx="4" fill="#f37320"/><rect x="0.7" y="0.7" width="30.6" height="30.6" rx="3.5" fill="none" stroke="#ffb073" stroke-width="1.2"/><g fill="#fff"><circle cx="10.5" cy="11" r="5.6"/><circle cx="10.5" cy="21" r="5.6"/><circle cx="21.5" cy="11" r="5.6"/><circle cx="21.5" cy="21" r="5.6"/><rect x="9" y="11" width="14" height="10"/></g><g fill="#f37320"><circle cx="10.5" cy="11.3" r="2"/><circle cx="10.5" cy="20.7" r="2"/><ellipse cx="19.8" cy="11.3" rx="3.4" ry="1.9"/><ellipse cx="19.8" cy="20.7" rx="3.4" ry="1.9"/><path d="M16 5.5L14.2 8.6H17.8ZM16 26.5L14.2 23.4H17.8ZM27.5 16L25 14.2V17.8ZM4.5 16L7 14.2V17.8Z"/></g></svg>
<svg style="left:372.8px;top:735.3px" width="29" height="24" viewBox="0 0 29 24"><rect x="0" y="0" width="29" height="24" fill="#000"/><rect x="0" y="0" width="29" height="2.5" fill="#9a9a9a"/><path d="M4 9.5H7V6.5H4.5V11H7.5M9 7.5V8.5M9 10V11M11 6L14 11.5" stroke="#ddd" stroke-width="1.1" fill="none"/><path d="M15 11.5H21" stroke="#fff" stroke-width="1.4"/><rect x="23" y="0.7" width="1.2" height="1.2" fill="#fff"/><rect x="25" y="0.7" width="1.2" height="1.2" fill="#fff"/><rect x="27" y="0.7" width="1.2" height="1.2" fill="#fff"/></svg>
<svg style="left:854px;top:745.7px" width="7.4" height="4.4" viewBox="0 0 8 5"><path d="M0 5H8L4 0Z" fill="#111"/></svg>
<svg style="left:872.6px;top:739px" width="18" height="18" viewBox="0 0 18 18"><path d="M2.5 1V16" stroke="#fff" stroke-width="1.6"/><path d="M3.5 2C6 0.5 8 3.5 11.5 2V9.5C8 11 6 8 3.5 9.5Z" fill="#e9f5fa" stroke="#555" stroke-width="0.8"/><circle cx="12.5" cy="12.5" r="4.8" fill="#e03c31" stroke="#fff" stroke-width="0.8"/><path d="M10.5 10.5L14.5 14.5M14.5 10.5L10.5 14.5" stroke="#fff" stroke-width="1.5"/></svg>
<svg style="left:898px;top:740px" width="17" height="15" viewBox="0 0 17 15"><rect x="4.5" y="2.5" width="11" height="8" fill="#64c8e8" stroke="#fff" stroke-width="1.3"/><rect x="0.7" y="0.7" width="4.2" height="6" rx="1" fill="#64c8e8" stroke="#fff" stroke-width="1.2"/><path d="M2.8 6.5V13.5H6" stroke="#fff" stroke-width="1.2" fill="none"/><path d="M10 10.5V13M6.5 13.7H13.5" stroke="#fff" stroke-width="1.4" fill="none"/><circle cx="2.8" cy="3" r="0.9" fill="#333"/></svg>
<svg style="left:922px;top:739px" width="18" height="18" viewBox="0 0 18 18"><path d="M0.8 6H3.2L7.8 1.6V15L3.2 10.8H0.8Z" fill="#fff" stroke="#555" stroke-width="0.8"/><path d="M3.2 6V10.8" stroke="#888" stroke-width="0.8"/><path d="M9.6 4.5Q10.8 6.5 10.4 8" stroke="#fff" stroke-width="1.1" fill="none"/><circle cx="10.9" cy="12.3" r="4.6" fill="#e03c31" stroke="#fff" stroke-width="0.8"/><path d="M9 10.4L12.8 14.2M12.8 10.4L9 14.2" stroke="#fff" stroke-width="1.5"/></svg>
<div class="t" style="left:958.7px;top:734px;font-size:12px;color:#000;letter-spacing:-0.104px;">8:10 AM</div>
<div class="t" style="left:955.6px;top:751px;font-size:12px;color:#000;letter-spacing:-0.221px;">10/2/2019</div>
<div class="win" style="left:0px;top:75px;width:600px;height:599.5px;background:#c3d7de"></div>
<div class="a" style="left:8px;top:106px;width:584px;height:561px;background:#fff"></div>
<svg style="left:9px;top:82px" width="14" height="17" viewBox="0 0 13 16"><defs><linearGradient id="fg" x1="0" y1="0" x2="1" y2="1"><stop offset="0" stop-color="#fdf4bd"/><stop offset="1" stop-color="#e9c85a"/></linearGradient></defs><path d="M5.5 1H12V14.6H5.5Z" fill="#e2bd4c"/><path d="M6.2 2.4L9.4 1.4V14.6L6.2 13.6Z" fill="#f3da7a"/><path d="M0.5 1.7L6.4 0.5V15.5L0.5 14.3Z" fill="url(#fg)" stroke="#dcbc50" stroke-width="0.6"/><rect x="10.7" y="8.8" width="1.2" height="3.4" fill="#3d9be0"/></svg>
<div class="a" style="left:31px;top:84px;width:1px;height:12px;background:#8fa3ab"></div>
<svg style="left:42px;top:83px" width="15" height="16" viewBox="0 0 15 16"><path d="M0.5 0.5H9L12.5 4V15.5H0.5Z" fill="#fff" stroke="#8a8a8a" stroke-width="1"/><path d="M9 0.5V4H12.5" fill="none" stroke="#8a8a8a" stroke-width="1"/><path d="M5.5 11L8 15L14 7" stroke="#ec7b4f" stroke-width="2.2" fill="none"/></svg>
<svg style="left:64px;top:82.5px" width="14" height="17" viewBox="0 0 13 16"><defs><linearGradient id="fg" x1="0" y1="0" x2="1" y2="1"><stop offset="0" stop-color="#fdf4bd"/><stop offset="1" stop-color="#e9c85a"/></linearGradient></defs><path d="M5.5 1H12V14.6H5.5Z" fill="#e2bd4c"/><path d="M6.2 2.4L9.4 1.4V14.6L6.2 13.6Z" fill="#f3da7a"/><path d="M0.5 1.7L6.4 0.5V15.5L0.5 14.3Z" fill="url(#fg)" stroke="#dcbc50" stroke-width="0.6"/><rect x="10.7" y="8.8" width="1.2" height="3.4" fill="#3d9be0"/></svg>
<svg style="left:85px;top:88px" width="9" height="8" viewBox="0 0 9 8"><path d="M0.5 1H8.5" stroke="#000" stroke-width="1.2"/><path d="M0.5 3.5H8.5L4.5 7.5Z" fill="#000"/></svg>
<div class="a" style="left:103px;top:84px;width:1px;height:12px;background:#8fa3ab"></div>
<div class="a" style="left:237px;top:79px;width:103px;height:27px;background:#ebcbfb"></div>
<div class="t" style="left:244.5px;top:87px;font-size:12px;color:#3b3b3b;letter-spacing:-0.126px;">Application Tools</div>
<div class="t" style="left:381.5px;top:83px;font-size:15px;color:#000;letter-spacing:0.01px;">Downloads</div>
<div class="cb" style="left:493px;top:76px;width:29px;height:21px"></div>
<div class="cb" style="left:521px;top:76px;width:27px;height:21px"></div>
<div class="cb" style="left:547px;top:76px;width:47px;height:21px"></div>
<div class="a" style="left:501.5px;top:86.5px;width:10px;height:3.5px;background:#000"></div>
<div class="a" style="left:530.0px;top:82px;width:10px;height:8px;border:2px solid #000"></div>
<svg style="left:566.5px;top:82px" width="9.6" height="8" viewBox="0 0 9.6 8"><path d="M0 0H3L4.8 2.4L6.6 0H9.6L6.3 4L9.6 8H6.6L4.8 5.6L3 8H0L3.3 4Z" fill="#000"/></svg>
<div class="a" style="left:8px;top:105px;width:229px;height:1px;background:#a3b0b6"></div>
<div class="a" style="left:340px;top:105px;width:252px;height:1px;background:#a3b0b6"></div>
<div class="a" style="left:8px;top:129px;width:584px;height:1px;background:#dadbdc"></div>
<div class="a" style="left:8px;top:106px;width:56px;height:23px;background:#1979ca"></div>
<div class="t" style="left:27.5px;top:112px;font-size:12px;color:#fff;letter-spacing:-0.534px;">File</div>
<div class="t" style="left:78.5px;top:113px;font-size:12px;color:#000;letter-spacing:-0.802px;">Home</div>
<div class="t" style="left:136.3px;top:113px;font-size:12px;color:#000;letter-spacing:-0.764px;">Share</div>
<div class="t" style="left:194.5px;top:113px;font-size:12px;color:#000;letter-spacing:-0.398px;">View</div>
<div class="t" style="left:267.3px;top:113px;font-size:12px;color:#000;letter-spacing:-0.361px;">Manage</div>
<div class="a" style="left:237px;top:106px;width:1px;height:23px;background:#efe3f5"></div>
<div class="a" style="left:339px;top:106px;width:1px;height:19px;background:linear-gradient(#c9c9c9,#f4f4f4)"></div>
<svg style="left:555px;top:114.5px" width="8" height="6" viewBox="0 0 8 6"><path d="M0.5 0.7L4 4.4L7.5 0.7" stroke="#9a9a9a" stroke-width="1.8" fill="none"/></svg>
<svg style="left:573px;top:110px" width="15" height="15" viewBox="0 0 15 15"><circle cx="7.5" cy="7.5" r="7.5" fill="#1e78d2"/><text x="7.5" y="11.8" text-anchor="middle" font-family="Liberation Sans,sans-serif" font-weight="bold" font-size="11.5" fill="#fff">?</text></svg>
<svg style="left:18.0px;top:137.7px" width="19" height="19" viewBox="0 0 19 19"><circle cx="9.5" cy="9.5" r="8.8" fill="#fff" stroke="#8b8b8b" stroke-width="1.1"/><g transform="translate(4.5,5)"><path d="M4.5 0.5L0.8 4.5L4.5 8.5M1 4.5H10" stroke="#808080" stroke-width="1.7" fill="none"/></g></svg>
<svg style="left:48.0px;top:137.7px" width="19" height="19" viewBox="0 0 19 19"><circle cx="9.5" cy="9.5" r="8.8" fill="#fff" stroke="#8b8b8b" stroke-width="1.1"/><g transform="translate(4.5,5)"><path d="M5.5 0.5L9.2 4.5L5.5 8.5M9 4.5H0" stroke="#808080" stroke-width="1.7" fill="none"/></g></svg>
<svg style="left:77px;top:146px" width="7" height="4" viewBox="0 0 7 4"><path d="M0 0H7L3.5 4Z" fill="#8b8b8b"/></svg>
<svg style="left:98px;top:142px" width="10" height="12" viewBox="0 0 10 12"><path d="M5 12V1.5M0.8 5.5L5 1.2L9.2 5.5" stroke="#777" stroke-width="1.4" fill="none"/></svg>
<div class="a" style="left:115px;top:136px;width:300px;height:24px;border:1px solid #aaa;background:#fff"></div>
<svg style="left:120px;top:140px" width="13" height="16" viewBox="0 0 13 16"><defs><linearGradient id="fg" x1="0" y1="0" x2="1" y2="1"><stop offset="0" stop-color="#fdf4bd"/><stop offset="1" stop-color="#e9c85a"/></linearGradient></defs><path d="M5.5 1H12V14.6H5.5Z" fill="#e2bd4c"/><path d="M6.2 2.4L9.4 1.4V14.6L6.2 13.6Z" fill="#f3da7a"/><path d="M0.5 1.7L6.4 0.5V15.5L0.5 14.3Z" fill="url(#fg)" stroke="#dcbc50" stroke-width="0.6"/><rect x="10.7" y="8.8" width="1.2" height="3.4" fill="#3d9be0"/></svg>
<div class="a" style="left:125px;top:191px;width:6px;height:1px;background:#e0e0e0"></div>
<svg style="left:28px;top:178px" width="16" height="16" viewBox="0 0 16 16"><path d="M8 0.8L10.1 5.7L15.4 6.1L11.4 9.6L12.6 14.8L8 12L3.4 14.8L4.6 9.6L0.6 6.1L5.9 5.7Z" fill="#fbc84a" stroke="#e8903a" stroke-width="1.1"/><path d="M8 3.5L9.2 6.7L12.3 6.9L10 9L10.7 12L8 10.4Z" fill="#fde69a"/></svg>
<div class="t" style="left:49.3px;top:181px;font-size:12px;color:#000;letter-spacing:-0.339px;">Favorites</div>
<svg style="left:38px;top:202px" width="16" height="13" viewBox="0 0 16 13"><rect x="0.5" y="0.5" width="15" height="10" fill="#2a5bc4" stroke="#8fa5c9"/><rect x="1.5" y="1.5" width="13" height="5" fill="#4f83de"/><rect x="0.5" y="9.8" width="15" height="2.4" fill="#3d4f6e"/></svg>
<div class="t" style="left:59.2px;top:202px;font-size:12px;color:#000;letter-spacing:-0.246px;">Desktop</div>
<svg style="left:39px;top:221px" width="13" height="16" viewBox="0 0 13 16"><defs><linearGradient id="fg" x1="0" y1="0" x2="1" y2="1"><stop offset="0" stop-color="#fdf4bd"/><stop offset="1" stop-color="#e9c85a"/></linearGradient></defs><path d="M5.5 1H12V14.6H5.5Z" fill="#e2bd4c"/><path d="M6.2 2.4L9.4 1.4V14.6L6.2 13.6Z" fill="#f3da7a"/><path d="M0.5 1.7L6.4 0.5V15.5L0.5 14.3Z" fill="url(#fg)" stroke="#dcbc50" stroke-width="0.6"/><rect x="10.7" y="8.8" width="1.2" height="3.4" fill="#3d9be0"/></svg>
<svg style="left:45px;top:226.3px" width="9.4" height="10" viewBox="0 0 8 8"><path d="M2.3 0H5.7V3.6H8L4 8L0 3.6H2.3Z" fill="#2f8fe0" stroke="#bfe0f7" stroke-width="0.5"/></svg>
<div class="t" style="left:59.2px;top:223px;font-size:12px;color:#000;letter-spacing:-0.096px;">Downloads</div>
<svg style="left:38px;top:242px" width="17" height="16" viewBox="0 0 17 16"><rect x="4.5" y="1.5" width="11" height="9" fill="#eef3f8" stroke="#7d8a99"/><path d="M6.5 4H13.5M6.5 6H13.5M6.5 8H11" stroke="#6b94c8" stroke-width="1"/><circle cx="4" cy="4" r="3.4" fill="#fff" stroke="#777"/><path d="M4 2V4H5.8" stroke="#555" stroke-width="0.9" fill="none"/><path d="M3 12.5H16V14.5H3Z" fill="#cfd6de" stroke="#7d8a99" stroke-width="0.8"/></svg>
<div class="t" style="left:59.2px;top:240px;height:20px;line-height:20px;width:62.8px;overflow:hidden;font-size:12px;letter-spacing:-0.17px">Recent places</div>
<div class="a" style="left:9px;top:281px;width:113px;height:21px;background:#f3f3f3;border:1px solid #dcdcdc"></div>
<svg style="left:28px;top:284px" width="17" height="15" viewBox="0 0 17 15"><rect x="4.5" y="0.5" width="12" height="9" fill="#1f3fc0" stroke="#a0a0a0"/><rect x="9.5" y="1.5" width="5" height="5" fill="#5f8bea"/><path d="M8 12.5H13M10.5 9.5V12.5" stroke="#777" stroke-width="1.4"/><rect x="0.5" y="3.5" width="3" height="9" fill="#ddd" stroke="#777" stroke-width="0.8"/></svg>
<div class="t" style="left:49.7px;top:286px;font-size:12px;color:#000;letter-spacing:-0.539px;">This PC</div>
<svg style="left:28px;top:325px" width="17" height="16" viewBox="0 0 17 16"><circle cx="6" cy="6" r="5.5" fill="#3c8ed8" stroke="#2c6aa8" stroke-width="0.8"/><path d="M3 3Q5 1.5 6.5 3.5T5 7T3.5 9.5Q2 8 2 6Z" fill="#5cb85c"/><rect x="7.5" y="5.5" width="9" height="6.5" fill="#1f3fc0" stroke="#9ab" stroke-width="0.9"/><path d="M10 14.5H14M12 12V14.5" stroke="#666" stroke-width="1.3"/></svg>
<div class="t" style="left:49.7px;top:328px;font-size:12px;color:#000;letter-spacing:0.013px;">Network</div>
<div class="a" style="left:139px;top:500px;width:437px;height:21px;background:#f3f3f3;border:1px solid #dcdcdc"></div>
<div class="a" style="left:143px;top:472px;width:14px;height:3px;background:#fff;border:1px solid #9aa9b6;border-top:none"></div>
<svg style="left:143px;top:481px" width="16" height="16" viewBox="0 0 16 16"><defs><linearGradient id="jg" x1="0" y1="0" x2="0" y2="1"><stop offset="0" stop-color="#fff"/><stop offset="1" stop-color="#d3dde7"/></linearGradient></defs><rect x="0.5" y="0.5" width="15" height="15" rx="2" fill="url(#jg)" stroke="#5f7f9b"/><path d="M0.8 15.2H15.2" stroke="#3f5f7b" stroke-width="0.9"/><path d="M9.5 2.2Q6.5 4.5 8 6.8" stroke="#ea7a2e" stroke-width="1.4" fill="none"/><path d="M10.8 4Q9 5.6 9.6 7.6" stroke="#ea7a2e" stroke-width="1" fill="none"/><path d="M4.5 9.2H10.5M4 11.2H11M5 13.2H10" stroke="#3f6fa3" stroke-width="1"/><path d="M11.5 9.3L13.2 10.4L11.5 11.6" stroke="#3f6fa3" stroke-width="0.9" fill="none"/></svg>
<svg style="left:143px;top:503px" width="16" height="14" viewBox="0 0 17 16"><rect x="0.5" y="0.5" width="16" height="15" fill="#fff" stroke="#8a8a8a"/><path d="M11 1.2H15.5" stroke="#666" stroke-width="1" stroke-dasharray="1 1"/><circle cx="7" cy="7" r="3.6" fill="#dfeaf5" stroke="#5a7fa8" stroke-width="1.3" stroke-dasharray="2 1"/><circle cx="7" cy="7" r="1.2" fill="#fff" stroke="#5a7fa8" stroke-width="0.8"/><circle cx="12" cy="11.5" r="2.2" fill="#dfeaf5" stroke="#5a7fa8" stroke-width="1" stroke-dasharray="1.5 0.8"/></svg>
<div class="t" style="left:163.3px;top:505px;font-size:12px;color:#000;letter-spacing:-0.354px;">runServer</div>
<div class="t" style="left:403.3px;top:505px;font-size:12px;color:#6d6d6d;letter-spacing:-0.305px;">3/22/2019 12:54 PM</div>
<div class="t" style="left:523.3px;top:505px;font-size:12px;color:#6d6d6d;letter-spacing:0.003px;">Windows</div>
<svg style="left:143px;top:523px" width="16" height="16" viewBox="0 0 16 16"><defs><linearGradient id="jg" x1="0" y1="0" x2="0" y2="1"><stop offset="0" stop-color="#fff"/><stop offset="1" stop-color="#d3dde7"/></linearGradient></defs><rect x="0.5" y="0.5" width="15" height="15" rx="2" fill="url(#jg)" stroke="#5f7f9b"/><path d="M0.8 15.2H15.2" stroke="#3f5f7b" stroke-width="0.9"/><path d="M9.5 2.2Q6.5 4.5 8 6.8" stroke="#ea7a2e" stroke-width="1.4" fill="none"/><path d="M10.8 4Q9 5.6 9.6 7.6" stroke="#ea7a2e" stroke-width="1" fill="none"/><path d="M4.5 9.2H10.5M4 11.2H11M5 13.2H10" stroke="#3f6fa3" stroke-width="1"/><path d="M11.5 9.3L13.2 10.4L11.5 11.6" stroke="#3f6fa3" stroke-width="0.9" fill="none"/></svg>
<div class="t" style="left:163.3px;top:526px;font-size:12px;color:#000;letter-spacing:-0.027px;">runtest</div>
<div class="t" style="left:403.3px;top:526px;font-size:12px;color:#6d6d6d;letter-spacing:-0.139px;">3/11/2019 6:00 AM</div>
<div class="t" style="left:523.3px;top:523px;height:19px;line-height:19.6px;width:52.2px;overflow:hidden;font-size:12px;color:#6d6d6d;letter-spacing:-0.189px">Executable</div>
<svg style="left:143px;top:544px" width="16" height="16" viewBox="0 0 16 16"><defs><linearGradient id="jg" x1="0" y1="0" x2="0" y2="1"><stop offset="0" stop-color="#fff"/><stop offset="1" stop-color="#d3dde7"/></linearGradient></defs><rect x="0.5" y="0.5" width="15" height="15" rx="2" fill="url(#jg)" stroke="#5f7f9b"/><path d="M0.8 15.2H15.2" stroke="#3f5f7b" stroke-width="0.9"/><path d="M9.5 2.2Q6.5 4.5 8 6.8" stroke="#ea7a2e" stroke-width="1.4" fill="none"/><path d="M10.8 4Q9 5.6 9.6 7.6" stroke="#ea7a2e" stroke-width="1" fill="none"/><path d="M4.5 9.2H10.5M4 11.2H11M5 13.2H10" stroke="#3f6fa3" stroke-width="1"/><path d="M11.5 9.3L13.2 10.4L11.5 11.6" stroke="#3f6fa3" stroke-width="0.9" fill="none"/></svg>
<div class="t" style="left:163.3px;top:547px;font-size:12px;color:#000;letter-spacing:-0.343px;">SerArmy2</div>
<div class="t" style="left:403.3px;top:547px;font-size:12px;color:#6d6d6d;letter-spacing:-0.301px;">4/30/2018 5:07 PM</div>
<div class="t" style="left:523.3px;top:544px;height:19px;line-height:19.6px;width:52.2px;overflow:hidden;font-size:12px;color:#6d6d6d;letter-spacing:-0.189px">Executable</div>
<svg style="left:143px;top:565px" width="16" height="16" viewBox="0 0 16 16"><defs><linearGradient id="jg" x1="0" y1="0" x2="0" y2="1"><stop offset="0" stop-color="#fff"/><stop offset="1" stop-color="#d3dde7"/></linearGradient></defs><rect x="0.5" y="0.5" width="15" height="15" rx="2" fill="url(#jg)" stroke="#5f7f9b"/><path d="M0.8 15.2H15.2" stroke="#3f5f7b" stroke-width="0.9"/><path d="M9.5 2.2Q6.5 4.5 8 6.8" stroke="#ea7a2e" stroke-width="1.4" fill="none"/><path d="M10.8 4Q9 5.6 9.6 7.6" stroke="#ea7a2e" stroke-width="1" fill="none"/><path d="M4.5 9.2H10.5M4 11.2H11M5 13.2H10" stroke="#3f6fa3" stroke-width="1"/><path d="M11.5 9.3L13.2 10.4L11.5 11.6" stroke="#3f6fa3" stroke-width="0.9" fill="none"/></svg>
<div class="t" style="left:163.3px;top:568px;font-size:12px;color:#000;letter-spacing:-0.204px;">SerArmy2-17-5</div>
<div class="t" style="left:403.3px;top:568px;font-size:12px;color:#6d6d6d;letter-spacing:-0.191px;">5/17/2018 2:04 AM</div>
<div class="t" style="left:523.3px;top:565px;height:19px;line-height:19.6px;width:52.2px;overflow:hidden;font-size:12px;color:#6d6d6d;letter-spacing:-0.189px">Executable</div>
<svg style="left:143px;top:586px" width="16" height="16" viewBox="0 0 16 16"><defs><linearGradient id="jg" x1="0" y1="0" x2="0" y2="1"><stop offset="0" stop-color="#fff"/><stop offset="1" stop-color="#d3dde7"/></linearGradient></defs><rect x="0.5" y="0.5" width="15" height="15" rx="2" fill="url(#jg)" stroke="#5f7f9b"/><path d="M0.8 15.2H15.2" stroke="#3f5f7b" stroke-width="0.9"/><path d="M9.5 2.2Q6.5 4.5 8 6.8" stroke="#ea7a2e" stroke-width="1.4" fill="none"/><path d="M10.8 4Q9 5.6 9.6 7.6" stroke="#ea7a2e" stroke-width="1" fill="none"/><path d="M4.5 9.2H10.5M4 11.2H11M5 13.2H10" stroke="#3f6fa3" stroke-width="1"/><path d="M11.5 9.3L13.2 10.4L11.5 11.6" stroke="#3f6fa3" stroke-width="0.9" fill="none"/></svg>
<div class="t" style="left:163.3px;top:589px;font-size:12px;color:#000;letter-spacing:-0.306px;">SerArmy2-Berus</div>
<div class="t" style="left:403.3px;top:589px;font-size:12px;color:#6d6d6d;letter-spacing:-0.191px;">3/12/2019 9:01 AM</div>
<div class="t" style="left:523.3px;top:586px;height:19px;line-height:19.6px;width:52.2px;overflow:hidden;font-size:12px;color:#6d6d6d;letter-spacing:-0.189px">Executable</div>
<svg style="left:143px;top:607px" width="16" height="16" viewBox="0 0 16 16"><defs><linearGradient id="jg" x1="0" y1="0" x2="0" y2="1"><stop offset="0" stop-color="#fff"/><stop offset="1" stop-color="#d3dde7"/></linearGradient></defs><rect x="0.5" y="0.5" width="15" height="15" rx="2" fill="url(#jg)" stroke="#5f7f9b"/><path d="M0.8 15.2H15.2" stroke="#3f5f7b" stroke-width="0.9"/><path d="M9.5 2.2Q6.5 4.5 8 6.8" stroke="#ea7a2e" stroke-width="1.4" fill="none"/><path d="M10.8 4Q9 5.6 9.6 7.6" stroke="#ea7a2e" stroke-width="1" fill="none"/><path d="M4.5 9.2H10.5M4 11.2H11M5 13.2H10" stroke="#3f6fa3" stroke-width="1"/><path d="M11.5 9.3L13.2 10.4L11.5 11.6" stroke="#3f6fa3" stroke-width="0.9" fill="none"/></svg>
<div class="t" style="left:163.3px;top:610px;font-size:12px;color:#000;letter-spacing:-0.27px;">SerArmy2-Fix</div>
<div class="t" style="left:403.3px;top:610px;font-size:12px;color:#6d6d6d;letter-spacing:-0.191px;">3/14/2019 8:28 AM</div>
<div class="t" style="left:523.3px;top:607px;height:19px;line-height:19.6px;width:52.2px;overflow:hidden;font-size:12px;color:#6d6d6d;letter-spacing:-0.189px">Executable</div>
<div class="a" style="left:575.5px;top:498px;width:16.5px;height:129px;background:#fff;border-left:1px solid #e2e2e2;border-right:1px solid #e8e8e8"></div>
<div class="a" style="left:576.3px;top:498px;width:14.5px;height:24.5px;background:#cdcdcd"></div>
<svg style="left:579.5px;top:615px" width="9" height="6" viewBox="0 0 9 6"><path d="M0.5 0.5L4.5 4.5L8.5 0.5" stroke="#444" stroke-width="1.3" fill="none"/></svg>
<div class="a" style="left:575.5px;top:610px;width:16.5px;height:17px;border:1px solid #dadada"></div>
<div class="a" style="left:125px;top:627px;width:451px;height:17px;background:#fff;border:1px solid #dadada"></div>
<div class="a" style="left:142px;top:628px;width:311px;height:15px;background:#cdcdcd"></div>
<div class="a" style="left:142px;top:627px;width:1px;height:17px;background:#dadada"></div>
<svg style="left:130px;top:631px" width="6" height="9" viewBox="0 0 6 9"><path d="M5 0.5L1 4.5L5 8.5" stroke="#444" stroke-width="1.3" fill="none"/></svg>
<svg style="left:564px;top:631px" width="6" height="9" viewBox="0 0 6 9"><path d="M1 0.5L5 4.5L1 8.5" stroke="#444" stroke-width="1.3" fill="none"/></svg>
<div class="a" style="left:557px;top:627px;width:1px;height:17px;background:#dadada"></div>
<div class="a" style="left:293px;top:632px;width:1px;height:7px;background:#444"></div>
<div class="a" style="left:295.5px;top:632px;width:1px;height:7px;background:#444"></div>
<div class="a" style="left:298px;top:632px;width:1px;height:7px;background:#444"></div>
<div class="t" style="left:22px;top:650px;font-size:12px;color:#1e3287;letter-spacing:-0.256px;">44 items</div>
<div class="t" style="left:87.5px;top:650px;font-size:12px;color:#1e3287;letter-spacing:-0.194px;">1 item selected</div>
<div class="t" style="left:172.3px;top:650px;font-size:12px;color:#1e3287;letter-spacing:-0.404px;">190 bytes</div>
<div class="a" style="left:76px;top:649px;width:1px;height:14px;background:#e6e6e6"></div>
<div class="a" style="left:231px;top:649px;width:1px;height:14px;background:#e6e6e6"></div>
<div class="a" style="left:544px;top:644px;width:22px;height:22.5px;background:#cbe4f7;border:1px solid #2f7fc8"></div>
<div class="a" style="left:548px;top:649.0px;width:3px;height:3px;border:1px solid #3c6ea5;background:#fff"></div>
<div class="a" style="left:553px;top:649.8px;width:4px;height:1.5px;background:#4a5a6a"></div>
<div class="a" style="left:558.5px;top:649.8px;width:4px;height:1.5px;background:#4a5a6a"></div>
<div class="a" style="left:548px;top:654.0px;width:3px;height:3px;border:1px solid #c0392b;background:#fff"></div>
<div class="a" style="left:553px;top:654.8px;width:4px;height:1.5px;background:#4a5a6a"></div>
<div class="a" style="left:558.5px;top:654.8px;width:4px;height:1.5px;background:#4a5a6a"></div>
<div class="a" style="left:548px;top:659.0px;width:3px;height:3px;border:1px solid #3c6ea5;background:#fff"></div>
<div class="a" style="left:553px;top:659.8px;width:4px;height:1.5px;background:#4a5a6a"></div>
<div class="a" style="left:558.5px;top:659.8px;width:4px;height:1.5px;background:#4a5a6a"></div>
<svg style="left:570.5px;top:650px" width="13.5" height="11" viewBox="0 0 14 11"><rect x="0.5" y="0.5" width="13" height="10" fill="#fff" stroke="#666"/><rect x="1.8" y="1.8" width="10.4" height="6.4" fill="#4f9ad8"/><path d="M1.8 8.2L5 5.5L8 7.5L10 6.5L12.2 8.2Z" fill="#3c7b4c"/></svg>
<div class="win" style="left:130px;top:130px;width:677px;height:343px;background:#c3d7de"></div>
<div class="a" style="left:140px;top:163px;width:659px;height:300px;background:#000"></div>
<svg style="left:142.2px;top:140.2px" width="16" height="13" viewBox="0 0 16 13"><rect x="0" y="0" width="16" height="13" fill="#000"/><rect x="0" y="0" width="16" height="2" fill="#8c8c8c"/><rect x="0.5" y="0.5" width="15" height="12" fill="none" stroke="#333" stroke-width="1"/><text x="1.5" y="10.5" font-family="Liberation Sans,sans-serif" font-size="7.5" font-weight="bold" fill="#fff">C:\.</text></svg>
<div class="t" style="left:431.8px;top:139px;font-size:15px;color:#000;letter-spacing:-0.352px;">Berus Army</div>
<div class="cb" style="left:698px;top:131px;width:29px;height:21px"></div>
<div class="cb" style="left:726px;top:131px;width:27px;height:21px"></div>
<div class="cb" style="left:752px;top:131px;width:47px;height:21px"></div>
<div class="a" style="left:706.5px;top:141.5px;width:10px;height:3.5px;background:#000"></div>
<div class="a" style="left:735.0px;top:137px;width:10px;height:8px;border:2px solid #000"></div>
<svg style="left:771.5px;top:137px" width="9.6" height="8" viewBox="0 0 9.6 8"><path d="M0 0H3L4.8 2.4L6.6 0H9.6L6.3 4L9.6 8H6.6L4.8 5.6L3 8H0L3.3 4Z" fill="#000"/></svg>
<div class="cmdtxt" style="left:139.7px;top:164px">Berus Army Server
Tai du lieu</div>
<div class="win" style="left:156px;top:156px;width:677px;height:342.5px;background:#66caea"></div>
<div class="a" style="left:166px;top:189px;width:640px;height:300px;background:#000"></div>
<svg style="left:168.3px;top:166.3px" width="16" height="13" viewBox="0 0 16 13"><rect x="0" y="0" width="16" height="13" fill="#000"/><rect x="0" y="0" width="16" height="2" fill="#8c8c8c"/><rect x="0.5" y="0.5" width="15" height="12" fill="none" stroke="#333" stroke-width="1"/><text x="1.5" y="10.5" font-family="Liberation Sans,sans-serif" font-size="7.5" font-weight="bold" fill="#fff">C:\.</text></svg>
<div class="t" style="left:391.3px;top:165px;font-size:15px;color:#000;letter-spacing:-0.112px;">C:\Windows\system32\cmd.exe</div>
<div class="cb" style="left:724px;top:157px;width:29px;height:21px"></div>
<div class="cb" style="left:752px;top:157px;width:27px;height:21px"></div>
<div class="cb" style="left:778px;top:157px;width:47px;height:21px;background:#c5584f"></div>
<div class="a" style="left:732.5px;top:167.5px;width:10px;height:3.5px;background:#000"></div>
<div class="a" style="left:761.0px;top:163px;width:10px;height:8px;border:2px solid #000"></div>
<svg style="left:797.5px;top:163px" width="9.6" height="8" viewBox="0 0 9.6 8"><path d="M0 0H3L4.8 2.4L6.6 0H9.6L6.3 4L9.6 8H6.6L4.8 5.6L3 8H0L3.3 4Z" fill="#000"/></svg>
<div class="a" style="left:806px;top:188px;width:17px;height:301px;background:#f0f0f0"></div>
<div class="a" style="left:806px;top:188px;width:17px;height:17px;background:#fff;border:1px solid #dadada"></div>
<div class="a" style="left:806px;top:472px;width:17px;height:17px;background:#fff;border:1px solid #dadada"></div>
<div class="a" style="left:806px;top:205px;width:17px;height:246px;background:#fff;border-left:1px solid #e5e5e5"></div>
<div class="a" style="left:806px;top:450px;width:17px;height:22px;background:#dadada;border:1px solid #b9b9b9"></div>
<div class="a" style="left:811px;top:456.6px;width:7px;height:1.6px;background:#505050"></div>
<div class="a" style="left:811px;top:460.3px;width:7px;height:1.6px;background:#505050"></div>
<div class="a" style="left:811px;top:464.0px;width:7px;height:1.6px;background:#505050"></div>
<svg style="left:810px;top:193px" width="9" height="6" viewBox="0 0 9 6"><path d="M0.5 5.5L4.5 1.5L8.5 5.5" stroke="#444" stroke-width="1.3" fill="none"/></svg>
<svg style="left:810px;top:478px" width="9" height="6" viewBox="0 0 9 6"><path d="M0.5 0.5L4.5 4.5L8.5 0.5" stroke="#444" stroke-width="1.3" fill="none"/></svg>
<div class="cmdtxt" style="left:165.7px;top:190px">Set mission id=15 idneed=15
Set mission id=16 idneed=16
Set mission id=16 idneed=16
Set mission id=16 idneed=16
Set mission id=17 idneed=17
Set mission id=17 idneed=17
Set mission id=17 idneed=17
Set mission id=18 idneed=18
Set mission id=18 idneed=18
Set mission id=18 idneed=18
Mission readed size=18
Start socket post=8122
Refresh BXH
java.net.BindException: Address already in use: JVM_Bind
        at java.net.DualStackPlainSocketImpl.bind0(Native Method)
        at java.net.DualStackPlainSocketImpl.socketBind(Unknown Source)
        at java.net.AbstractPlainSocketImpl.bind(Unknown Source)
        at java.net.PlainSocketImpl.bind(Unknown Source)
        at java.net.ServerSocket.bind(Unknown Source)
        at java.net.ServerSocket.&lt;init&gt;(Unknown Source)
        at java.net.ServerSocket.&lt;init&gt;(Unknown Source)
        at army2.server.ServerManager.start(ServerManager.java:890)
        at army2.server.SerArmy.main(SerArmy.java:27)
Shutdown Server!
C:\Users\vlogslhp\Downloads\Downloads&gt;</div>
<div class="a" style="left:470px;top:485.5px;width:8px;height:2px;background:#c0c0c0"></div>
<!--REST-->
</body>
</html>
